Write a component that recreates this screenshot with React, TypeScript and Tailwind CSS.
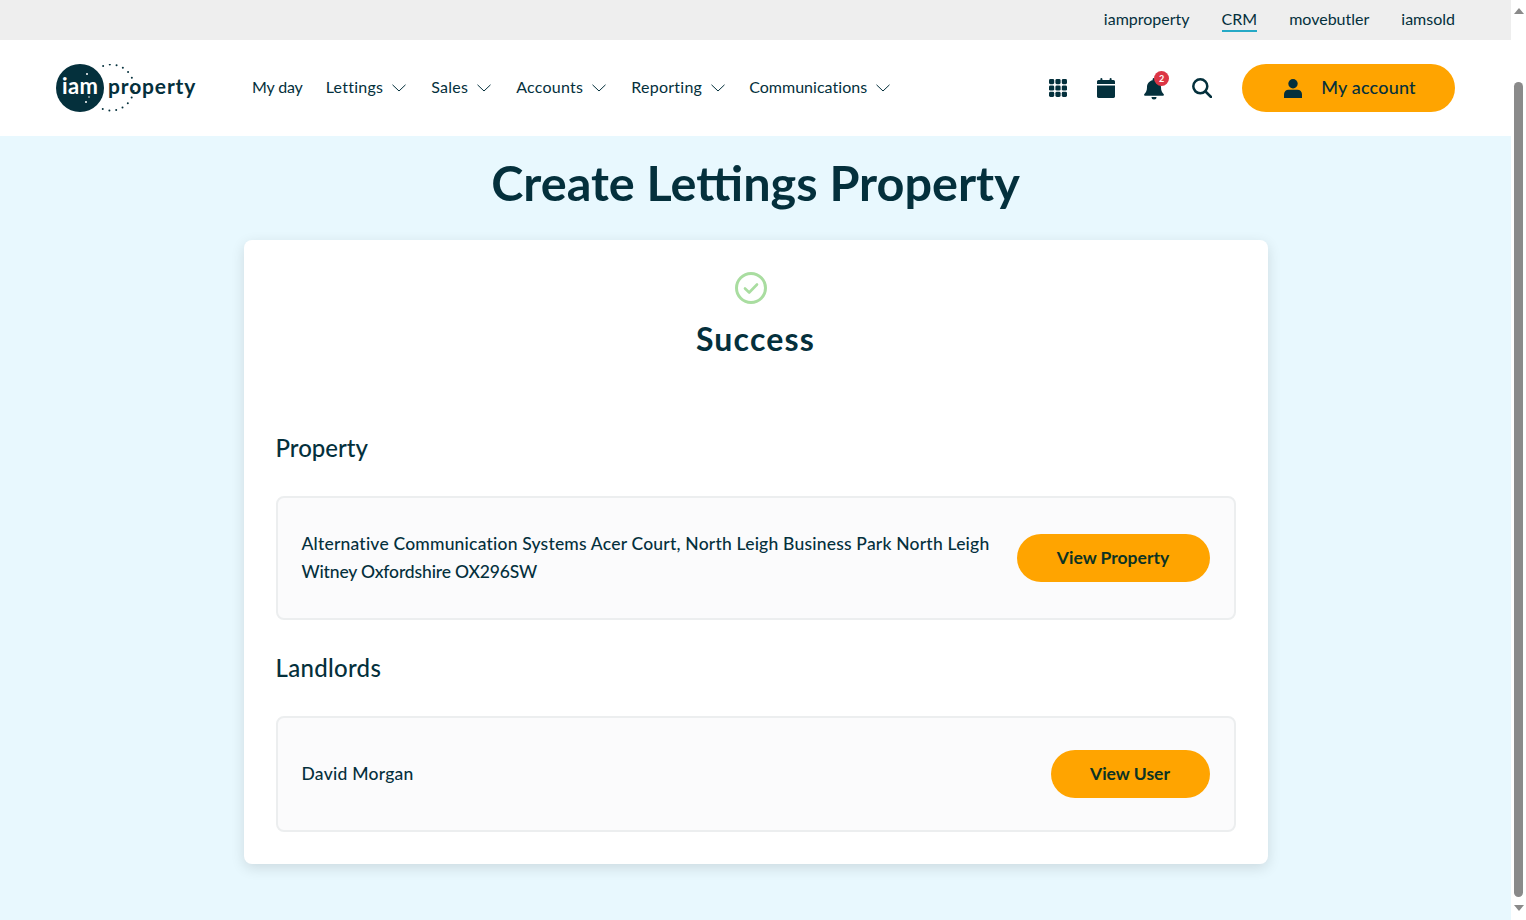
const ink = '#04303c';

function Chevron() {
  return (
    <svg width="14" height="8" viewBox="0 0 14 8" fill="none" stroke="#04303c" strokeWidth="1" className="ml-[9px] mt-[2px]">
      <path d="M0.5 0.8 7 7 13.5 0.8" />
    </svg>
  );
}

function NavItem({ label, className }: { label: string; className?: string }) {
  return (
    <div className="flex items-center">
      <span className={className}>{label}</span>
      <Chevron />
    </div>
  );
}

function Logo() {
  // dotted ring sits behind the wordmark, open towards the solid circle
  const dots = Array.from({ length: 14 }, (_, i) => {
    const a = (-110 + i * 17) * (Math.PI / 180);
    return { x: 55 + 23 * Math.cos(a), y: 23.5 + 23 * Math.sin(a) };
  });
  return (
    <div className="relative h-[48px] w-[140px]">
      <svg width="104" height="50" viewBox="0 0 104 50" className="absolute left-0 top-0">
        <circle cx="24" cy="24" r="24" fill="#04303c" />
        {dots.map((d, i) => (
          <circle key={i} cx={d.x} cy={d.y} r="1" fill="#04303c" />
        ))}
        <circle cx="31" cy="10" r="1" fill="#fff" />
        <circle cx="30" cy="38" r="1" fill="#fff" />
        <circle cx="33" cy="33" r="0.8" fill="#fff" />
      </svg>
      <span className="absolute left-[6px] top-[8px] text-[22px] font-bold leading-[28px] tracking-[0.4px] text-white">iam</span>
      <span className="absolute left-[52px] top-[8px] text-[21px] font-bold leading-[28px] tracking-[0.85px] text-[#04303c]">property</span>
    </div>
  );
}

function ResultRow({
  text,
  action,
  height,
  buttonWidth,
}: {
  text: React.ReactNode;
  action: string;
  height: string;
  buttonWidth: string;
}) {
  return (
    <div className={`flex items-center justify-between rounded-[8px] border-2 border-[#eceeef] bg-[#fbfbfc] pl-[24px] pr-[24px] ${height}`}>
      <div className="text-[17.5px] font-medium leading-[28px]">{text}</div>
      <button type="button" className={`h-[48px] shrink-0 rounded-full bg-[#ffa400] text-[17.5px] font-bold text-[#0c3324] ${buttonWidth}`}>
        {action}
      </button>
    </div>
  );
}

export default function App() {
  return (
    <div
      className="flex h-[920px] w-full overflow-hidden bg-[#e8f8fe]"
      style={{ fontFamily: 'Lato, "Noto Sans", sans-serif', color: ink }}
    >
      <div className="flex min-w-0 flex-1 flex-col">
        <div className="flex h-[40px] items-center justify-end gap-[32px] bg-[#eeeeee] pb-[2px] pr-[56px] text-[16px]">
          <span>iamproperty</span>
          <span className="mt-[1px] border-b-2 border-[#25a9c6] leading-[22px]">CRM</span>
          <span>movebutler</span>
          <span>iamsold</span>
        </div>

        <header className="flex h-[96px] items-center bg-white pl-[56px] pr-[56px]">
          <Logo />
          <nav className="mb-[2px] ml-[56px] flex items-center gap-[25px] text-[16px] tracking-[0.25px]">
            <span className="mr-[-2px] tracking-[-0.15px]">My day</span>
            <NavItem label="Lettings" />
            <NavItem label="Sales" />
            <NavItem label="Accounts" />
            <NavItem label="Reporting" />
            <NavItem label="Communications" className="ml-[-1px] tracking-[0.03px]" />
          </nav>
          <div className="ml-auto flex items-center">
            <div className="flex items-center gap-[28px]">
              <div className="flex w-[20px] justify-center">
                <svg width="18" height="18" viewBox="0 0 18 18" fill="#04303c">
                  {[0, 6.4, 12.8].flatMap((y) =>
                    [0, 6.4, 12.8].map((x) => <rect key={`${x}-${y}`} x={x} y={y} width="5.2" height="5.2" rx="1.4" />),
                  )}
                </svg>
              </div>
              <svg width="20" height="20" viewBox="0 0 18 20" fill="#04303c">
                <rect x="3.4" y="0" width="2" height="4" rx="1" />
                <rect x="12.6" y="0" width="2" height="4" rx="1" />
                <path d="M1.5 2h15A1.5 1.5 0 0 1 18 3.5V6H0V3.5A1.5 1.5 0 0 1 1.5 2ZM0 7.4h18v11A1.5 1.5 0 0 1 16.5 20h-15A1.5 1.5 0 0 1 0 18.4Z" />
              </svg>
              <div className="relative h-[20px] w-[20px]">
                <svg width="20" height="22" viewBox="0 0 20 22" fill="#04303c">
                  <path d="M10 0a1.4 1.4 0 0 1 1.4 1.4v.9C15 3 17 6 17 9.3c0 3.6 1 5 2.6 6.8.6.7.2 1.7-.8 1.7H1.2c-1 0-1.4-1-.8-1.7C2 14.3 3 12.9 3 9.3 3 6 5 3 8.6 2.3v-.9A1.4 1.4 0 0 1 10 0Z" />
                  <path d="M7.5 19h5a2.5 2.5 0 0 1-5 0Z" />
                </svg>
                <span className="absolute left-[10px] top-[-7px] flex h-[15px] w-[15px] items-center justify-center rounded-full bg-[#dc3545] text-[9px] font-bold leading-none text-white">
                  2
                </span>
              </div>
              <svg width="20" height="20" viewBox="0 0 20 20" fill="none" stroke="#04303c" strokeWidth="2.5">
                <circle cx="8.3" cy="8.3" r="7" />
                <path d="M13.5 13.5 19 19" strokeLinecap="round" />
              </svg>
            </div>
            <button type="button" className="ml-[30px] flex h-[48px] w-[213px] items-center justify-center gap-[19px] rounded-full bg-[#ffa400] pb-[2px] pl-[3px] text-[18px] font-medium tracking-[0.2px]">
              <svg width="18" height="19" viewBox="0 0 18 19" fill="#04303c" className="mt-[2px]">
                <circle cx="9" cy="4.7" r="4.7" />
                <path d="M4.5 10.8h9c2.5 0 4.5 2 4.5 4.5V19H0v-3.7c0-2.5 2-4.5 4.5-4.5Z" />
              </svg>
              My account
            </button>
          </div>
        </header>

        <main className="flex flex-1 flex-col items-center">
          <h1 className="mt-[18px] h-[56px] text-[48.6px] font-bold leading-[56px]">Create Lettings Property</h1>
          <section className="mt-[30px] flex h-[624px] w-[1024px] flex-col rounded-[8px] bg-white px-[32px] shadow-[0_4px_14px_rgba(0,0,0,0.12)]">
            <div className="mt-[32px] flex h-[32px] justify-center pr-[10px]">
              <svg width="32" height="32" viewBox="0 0 32 32" fill="none" stroke="#a9dda0" strokeWidth="3">
                <circle cx="16" cy="16" r="14.5" />
                <path d="M10 16.5 14.2 20.5 22 12.5" strokeWidth="2.6" strokeLinecap="round" strokeLinejoin="round" />
              </svg>
            </div>
            <h2 className="mt-[15px] text-center text-[32px] font-bold leading-[40px] tracking-[1.2px]">Success</h2>

            <h3 className="mt-[73px] text-[24px] font-medium leading-[32px]">Property</h3>
            <div className="mt-[32px]">
              <ResultRow
                height="h-[124px]"
                action="View Property"
                buttonWidth="w-[193px]"
                text={
                  <>
                    <p className="tracking-[0.2px]">Alternative Communication Systems Acer Court, North Leigh Business Park North Leigh</p>
                    <p className="tracking-[-0.15px]">Witney Oxfordshire OX296SW</p>
                  </>
                }
              />
            </div>

            <h3 className="mt-[32px] text-[24px] font-medium leading-[32px] tracking-[0.3px]">Landlords</h3>
            <div className="mt-[32px]">
              <ResultRow
                height="h-[116px]"
                action="View User"
                buttonWidth="w-[159px]"
                text={<p className="tracking-[0.25px]">David Morgan</p>}
              />
            </div>
          </section>
        </main>
      </div>

      <div className="flex w-[15px] shrink-0 flex-col items-center bg-white">
        <div className="mt-[8px] h-0 w-0 border-x-[5px] border-b-[6px] border-x-transparent border-b-[#8a8a8a]" />
        <div className="mt-[68px] h-[815px] w-[9px] rounded-full bg-[#8a8a8a]" />
        <div className="mt-[8px] h-0 w-0 border-x-[5px] border-t-[6px] border-x-transparent border-t-[#8a8a8a]" />
      </div>
    </div>
  );
}
